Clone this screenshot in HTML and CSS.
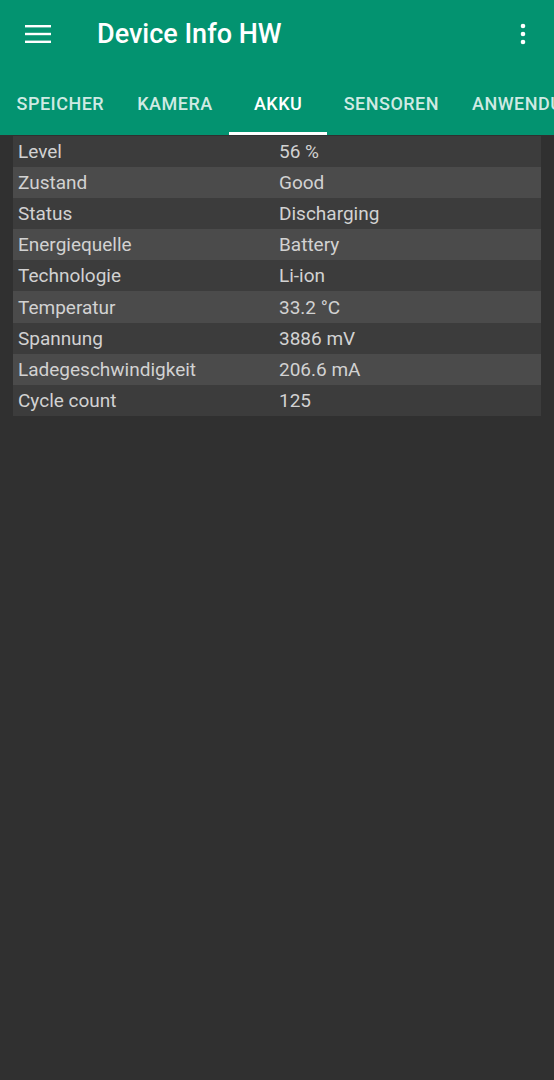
FILE: index.html
```html
<!DOCTYPE html>
<html lang="de">
<head>
  <meta charset="UTF-8">
  <meta name="viewport" content="width=device-width, initial-scale=1.0">
  <title>Device Info HW</title>
  <link rel="stylesheet" href="styles.css">
</head>
<body>
  <header class="appbar">
    <div class="toolbar">
      <svg class="icon menu" width="26" height="20" viewBox="0 0 26 20">
        <rect x="0" y="1" width="26" height="2.4" fill="#fff"/>
        <rect x="0" y="8.8" width="26" height="2.4" fill="#fff"/>
        <rect x="0" y="16.6" width="26" height="2.4" fill="#fff"/>
      </svg>
      <h1 class="title">Device Info HW</h1>
      <svg class="icon more" width="6" height="22" viewBox="0 0 6 22">
        <circle cx="3" cy="3" r="2.3" fill="#fff"/>
        <circle cx="3" cy="11" r="2.3" fill="#fff"/>
        <circle cx="3" cy="19" r="2.3" fill="#fff"/>
      </svg>
    </div>
    <nav class="tabs">
      <div class="tab">Speicher</div>
      <div class="tab">Kamera</div>
      <div class="tab active">Akku</div>
      <div class="tab">Sensoren</div>
      <div class="tab">Anwendungen</div>
    </nav>
  </header>

  <main class="content">
    <div class="table">
      <div class="row"><span>Level</span><span>56 %</span></div>
      <div class="row"><span>Zustand</span><span>Good</span></div>
      <div class="row"><span>Status</span><span>Discharging</span></div>
      <div class="row"><span>Energiequelle</span><span>Battery</span></div>
      <div class="row"><span>Technologie</span><span>Li-ion</span></div>
      <div class="row"><span>Temperatur</span><span>33.2 °C</span></div>
      <div class="row"><span>Spannung</span><span>3886 mV</span></div>
      <div class="row"><span>Ladegeschwindigkeit</span><span>206.6 mA</span></div>
      <div class="row"><span>Cycle count</span><span>125</span></div>
    </div>
  </main>
</body>
</html>
```

FILE: styles.css
```css
html, body {
  height: 100%;
}
body {
  margin: 0;
  background: #303030;
  font-family: Roboto, "Noto Sans", sans-serif;
  color: #d2d2d2;
  overflow: hidden;
}
.appbar {
  background: #039370;
  color: #fff;
}
.toolbar {
  height: 68px;
  display: flex;
  align-items: center;
  padding: 0 28px 0 25px;
}
.toolbar .icon {
  flex: none;
}
.title {
  margin: 0 0 0 46px;
  font-size: 27px;
  font-weight: 500;
  flex: 1;
}
.tabs {
  height: 67px;
  display: flex;
  white-space: nowrap;
  overflow: hidden;
}
.tab {
  flex: none;
  display: flex;
  align-items: center;
  justify-content: center;
  padding: 6px 16.5px 0;
  min-width: 98px;
  font-size: 18px;
  font-weight: 500;
  letter-spacing: 0.5px;
  text-transform: uppercase;
  color: rgba(255, 255, 255, 0.82);
  border-bottom: 3px solid transparent;
  box-sizing: border-box;
}
.tab.active {
  color: #fff;
  border-bottom-color: #fff;
}
.content {
  padding: 1px 13px 0;
}
.table {
  background: #3c3c3c;
}
.row {
  display: grid;
  grid-template-columns: 261px 1fr;
  align-items: center;
  height: 31.1px;
  padding-left: 5px;
  font-size: 19px;
}
.row:nth-child(even) {
  background: #4b4b4b;
}
```
